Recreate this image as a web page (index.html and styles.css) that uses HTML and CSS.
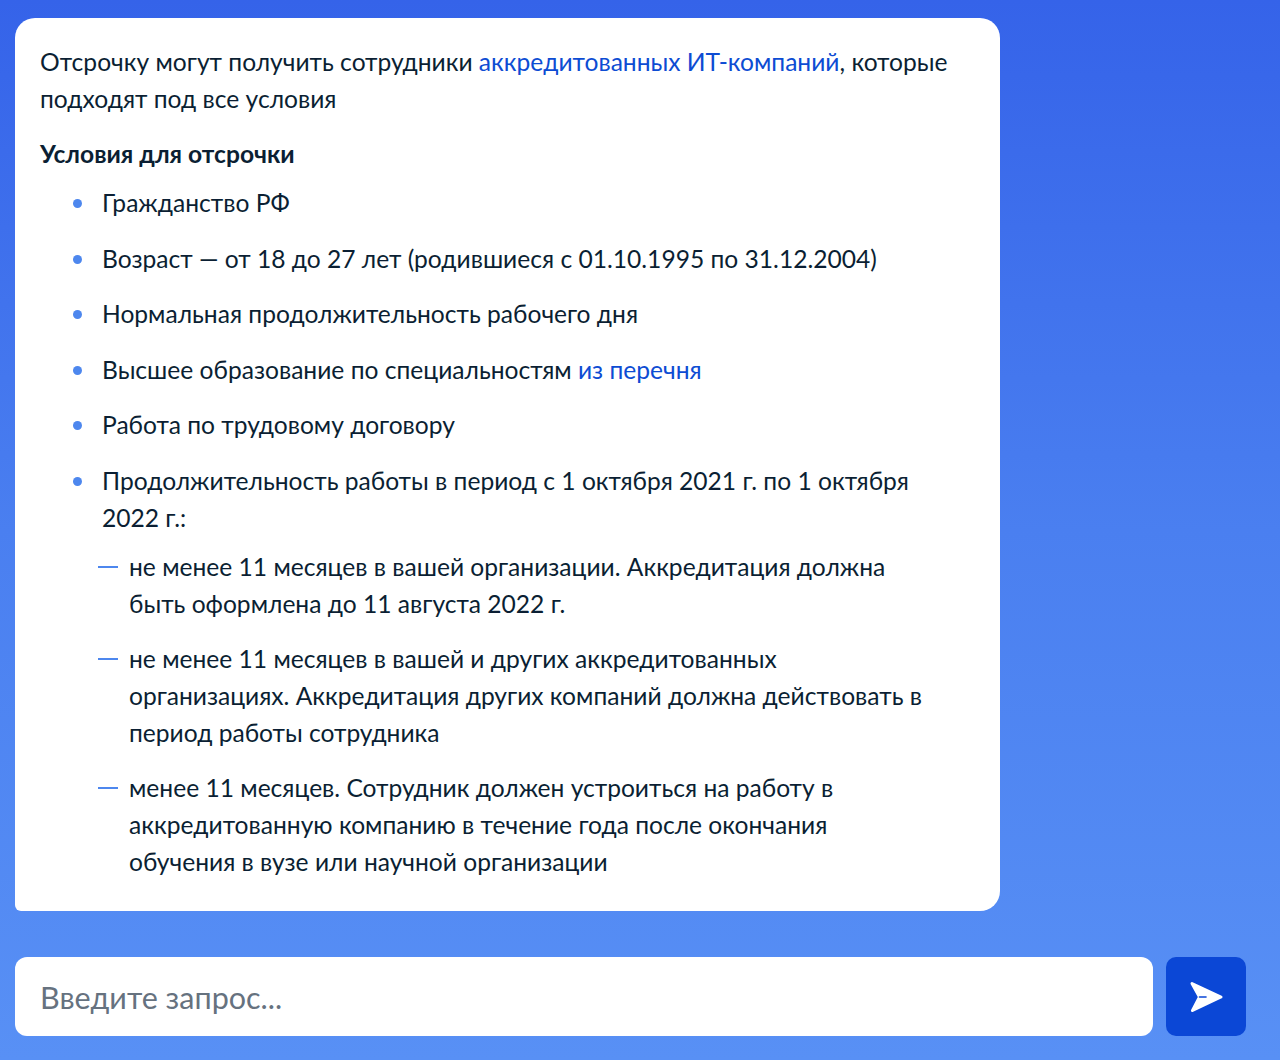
FILE: index.html
```html
<!DOCTYPE html>
<html lang="ru">
<head>
  <meta charset="UTF-8">
  <title>Отсрочка для ИТ-специалистов</title>
  <meta name="viewport" content="width=device-width, initial-scale=1.0">
  <link rel="stylesheet" href="styles.css">
</head>
<body>
  <div class="chat">
    <div class="bubble">
      <p class="intro">Отсрочку могут получить сотрудники <a href="#">аккредитованных ИТ-компаний</a>, которые подходят под все условия</p>

      <h3>Условия для отсрочки</h3>

      <ul class="conditions">
        <li>Гражданство РФ</li>
        <li>Возраст — от 18 до 27 лет (родившиеся с 01.10.1995 по 31.12.2004)</li>
        <li>Нормальная продолжительность рабочего дня</li>
        <li>Высшее образование по специальностям <a href="#">из перечня</a></li>
        <li>Работа по трудовому договору</li>
        <li>Продолжительность работы в период с 1 октября 2021 г. по 1 октября 2022 г.:</li>
      </ul>

      <ul class="terms">
        <li>не менее 11 месяцев в вашей организации. Аккредитация должна быть оформлена до 11 августа 2022 г.</li>
        <li>не менее 11 месяцев в вашей и других аккредитованных организациях. Аккредитация других компаний должна действовать в период работы сотрудника</li>
        <li>менее 11 месяцев. Сотрудник должен устроиться на работу в аккредитованную компанию в течение года после окончания обучения в вузе или научной организации</li>
      </ul>
    </div>
  </div>

  <form class="composer" onsubmit="return false">
    <input type="text" class="query" placeholder="Введите запрос...">
    <button type="submit" class="send" aria-label="Отправить">
      <svg width="34" height="34" viewBox="0 0 34 34">
        <path d="M3 3.5 L32 17 L3.5 30.5 L10.5 17 Z" fill="#fff" stroke="#fff" stroke-width="3" stroke-linejoin="round"/>
        <path d="M10.5 17 H17" stroke="#0b47d6" stroke-width="1.6" stroke-linecap="round"/>
      </svg>
    </button>
  </form>
</body>
</html>
```

FILE: styles.css
```css
html {
  height: 100%;
}
body {
  margin: 0;
  min-height: 100%;
  box-sizing: border-box;
  padding: 18px 34px 24px 15px;
  font-family: 'Lato', 'Noto Sans', sans-serif;
  color: #0b1f33;
  background: linear-gradient(180deg, #3563e9 0%, #4a7ff0 50%, #5890f5 100%);
  display: flex;
  flex-direction: column;
}
a {
  color: #0d4cd3;
  text-decoration: none;
}

.chat {
  flex: 1;
}
.bubble {
  width: 985px;
  box-sizing: border-box;
  background: #fff;
  border-radius: 20px 20px 20px 6px;
  padding: 25px 25px 31px 25px;
  font-size: 24.6px;
  line-height: 37px;
}
.intro {
  margin: 0;
}
h3 {
  margin: 18px 0 0;
  font-size: 24.6px;
  font-weight: 700;
  line-height: 37px;
}

ul {
  list-style: none;
  margin: 0;
  padding: 0;
}
.conditions {
  margin-top: 12px;
  padding: 0 40px 0 62px;
}
.conditions li {
  position: relative;
  margin-bottom: 18.5px;
}
.conditions li::before {
  content: "";
  position: absolute;
  left: -29px;
  top: 15px;
  width: 9px;
  height: 9px;
  border-radius: 50%;
  background: #4d87ee;
}
.terms {
  margin-top: -6px;
  padding: 0 40px 0 89px;
}
.terms li {
  position: relative;
  margin-bottom: 18px;
}
.terms li:last-child {
  margin-bottom: 0;
}
.terms li::before {
  content: "";
  position: absolute;
  left: -31px;
  top: 18px;
  width: 20px;
  height: 2px;
  background: #4d87ee;
}

.composer {
  display: flex;
  gap: 13px;
  margin-top: 46px;
}
.query {
  flex: 1;
  height: 79px;
  box-sizing: border-box;
  border: none;
  border-radius: 12px;
  padding: 0 25px;
  font-family: 'Lato', 'Noto Sans', sans-serif;
  font-size: 30.5px;
  color: #0b1f33;
  outline: none;
}
.query::placeholder {
  color: #66727f;
}
.send {
  width: 80px;
  height: 79px;
  border: none;
  border-radius: 10px;
  background: #0b47d6;
  display: flex;
  align-items: center;
  justify-content: center;
  cursor: pointer;
  padding: 0;
}
```
